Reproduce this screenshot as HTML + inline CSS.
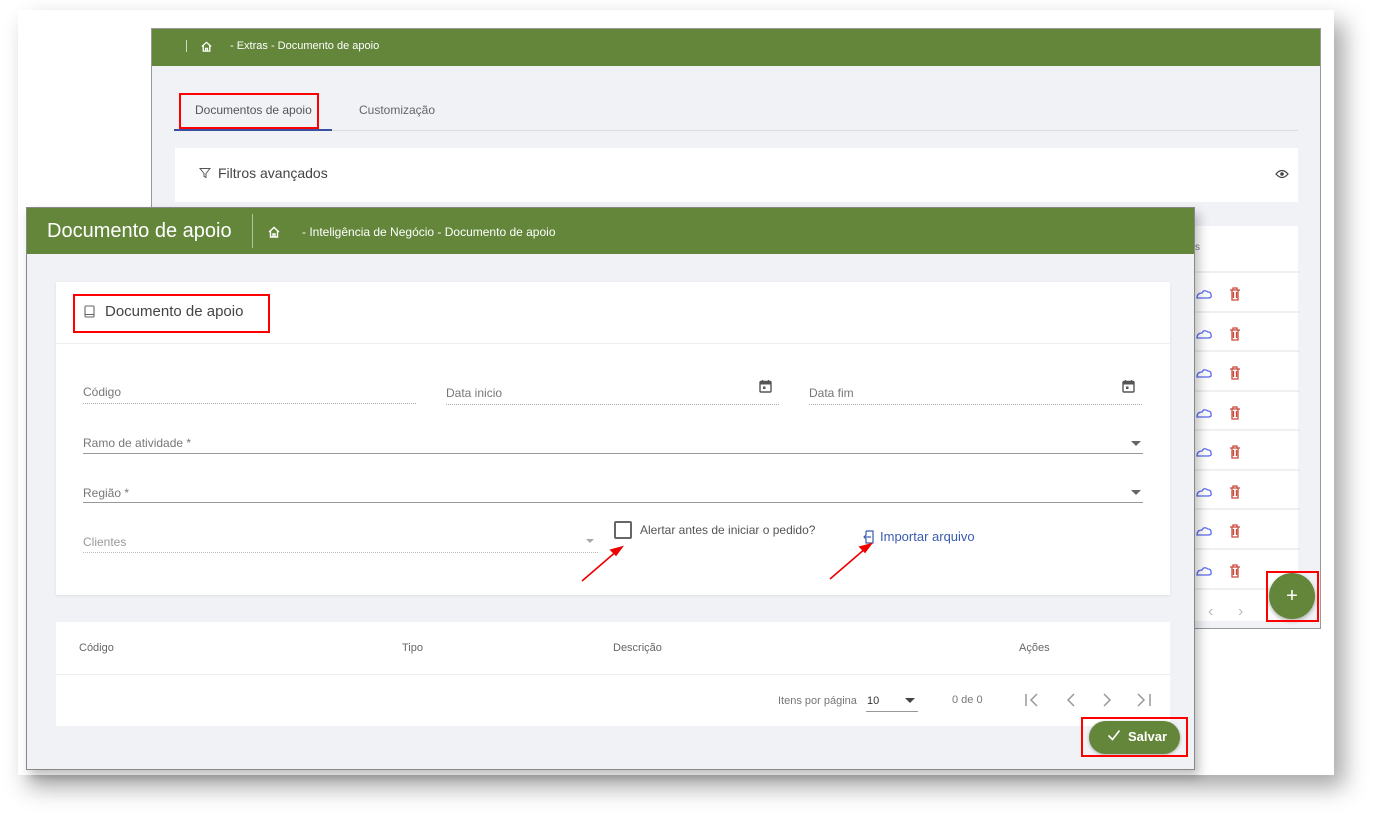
<!DOCTYPE html>
<html><head><meta charset="utf-8"><style>
*{box-sizing:border-box;margin:0;padding:0}
body{width:1382px;height:824px;background:#fff;position:relative;overflow:hidden;font-family:"Liberation Sans",sans-serif;}
.abs{position:absolute}
.g{background:#63863a}
.t{color:#777;font-size:12px;position:absolute}
.red{position:absolute;border:2px solid #f00}
</style></head><body>
<div class="abs" style="left:18px;top:10px;width:1316px;height:765px;background:#fff;box-shadow:10px 12px 22px rgba(0,0,0,.35)"></div>
<!-- back window -->
<div class="abs" style="left:151px;top:28px;width:1170px;height:601px;background:#f1f2f6;border:1px solid #999"></div>
<div class="abs g" style="left:152px;top:29px;width:1168px;height:37px"></div>
<div class="abs" style="left:186px;top:40px;width:1px;height:12px;background:#cfd8c0"></div>
<svg class="abs" style="left:200px;top:40px" width="13" height="13" viewBox="0 0 14 14"><path d="M2 7L7 2.5 12 7M3.5 6v6h7V6M6 12V9h2v3" fill="none" stroke="#fff" stroke-width="1.4"/></svg>
<div class="abs" style="left:230px;top:40px;color:#fff;font-size:11px">- Extras - Documento de apoio</div>
<div class="t" style="left:195px;top:103px;font-size:12px;color:#555">Documentos de apoio</div>
<div class="t" style="left:359px;top:103px;font-size:12px;color:#666">Customização</div>
<div class="abs" style="left:174px;top:130px;width:1124px;height:1px;background:#ddd"></div>
<div class="abs" style="left:174px;top:129px;width:158px;height:2px;background:#3a4fa0"></div>
<div class="red" style="left:179px;top:93px;width:140px;height:36px"></div>
<div class="abs" style="left:175px;top:148px;width:1123px;height:54px;background:#fff"></div>
<svg class="abs" style="left:199px;top:167px" width="12" height="12" viewBox="0 0 12 12"><path d="M1 1.5h10L7 6.5v4L5 9.5v-3z" fill="none" stroke="#555" stroke-width="1"/></svg>
<div class="abs" style="left:218px;top:165px;font-size:14px;color:#444">Filtros avançados</div>
<svg class="abs" style="left:1275px;top:169px" width="14" height="10" viewBox="0 0 14 10"><path d="M1 5Q7-2 13 5Q7 12 1 5z" fill="none" stroke="#444" stroke-width="1.2"/><circle cx="7" cy="5" r="1.8" fill="#444"/></svg>
<div class="abs" style="left:1190px;top:226px;width:108px;height:395px;background:#fff"></div>
<div class="t" style="left:1195px;top:242px;font-size:10px">s</div>
<svg class="abs" style="left:1190px;top:270px" width="110" height="350" fill="none" stroke-width="1.3">
<g transform="translate(0,0)"><line x1="0" y1="2" x2="110" y2="2" stroke="#e6e6e6"/><path d="M7 28q0-5 5-5q2-4 6-1q3 0 3 3q1 3-3 3z" stroke="#5a6cf0"/><path d="M40 20h10M42 20v10h6V20M43.5 22v6M46.5 22v6M43 20v-2h4v2" stroke="#c9493a"/></g>
<g transform="translate(0,40)"><line x1="0" y1="2" x2="110" y2="2" stroke="#e6e6e6"/><path d="M7 28q0-5 5-5q2-4 6-1q3 0 3 3q1 3-3 3z" stroke="#5a6cf0"/><path d="M40 20h10M42 20v10h6V20M43.5 22v6M46.5 22v6M43 20v-2h4v2" stroke="#c9493a"/></g>
<g transform="translate(0,79)"><line x1="0" y1="2" x2="110" y2="2" stroke="#e6e6e6"/><path d="M7 28q0-5 5-5q2-4 6-1q3 0 3 3q1 3-3 3z" stroke="#5a6cf0"/><path d="M40 20h10M42 20v10h6V20M43.5 22v6M46.5 22v6M43 20v-2h4v2" stroke="#c9493a"/></g>
<g transform="translate(0,119)"><line x1="0" y1="2" x2="110" y2="2" stroke="#e6e6e6"/><path d="M7 28q0-5 5-5q2-4 6-1q3 0 3 3q1 3-3 3z" stroke="#5a6cf0"/><path d="M40 20h10M42 20v10h6V20M43.5 22v6M46.5 22v6M43 20v-2h4v2" stroke="#c9493a"/></g>
<g transform="translate(0,158)"><line x1="0" y1="2" x2="110" y2="2" stroke="#e6e6e6"/><path d="M7 28q0-5 5-5q2-4 6-1q3 0 3 3q1 3-3 3z" stroke="#5a6cf0"/><path d="M40 20h10M42 20v10h6V20M43.5 22v6M46.5 22v6M43 20v-2h4v2" stroke="#c9493a"/></g>
<g transform="translate(0,198)"><line x1="0" y1="2" x2="110" y2="2" stroke="#e6e6e6"/><path d="M7 28q0-5 5-5q2-4 6-1q3 0 3 3q1 3-3 3z" stroke="#5a6cf0"/><path d="M40 20h10M42 20v10h6V20M43.5 22v6M46.5 22v6M43 20v-2h4v2" stroke="#c9493a"/></g>
<g transform="translate(0,237)"><line x1="0" y1="2" x2="110" y2="2" stroke="#e6e6e6"/><path d="M7 28q0-5 5-5q2-4 6-1q3 0 3 3q1 3-3 3z" stroke="#5a6cf0"/><path d="M40 20h10M42 20v10h6V20M43.5 22v6M46.5 22v6M43 20v-2h4v2" stroke="#c9493a"/></g>
<g transform="translate(0,277)"><line x1="0" y1="2" x2="110" y2="2" stroke="#e6e6e6"/><path d="M7 28q0-5 5-5q2-4 6-1q3 0 3 3q1 3-3 3z" stroke="#5a6cf0"/><path d="M40 20h10M42 20v10h6V20M43.5 22v6M46.5 22v6M43 20v-2h4v2" stroke="#c9493a"/></g>
<line x1="0" y1="319" x2="110" y2="319" stroke="#e6e6e6"/>
</svg>
<div class="abs" style="left:1208px;top:603px;color:#bbb;font-size:16px">&#8249;</div>
<div class="abs" style="left:1238px;top:603px;color:#bbb;font-size:16px">&#8250;</div>
<div class="abs g" style="left:1269px;top:573px;width:46px;height:46px;border-radius:50%;box-shadow:0 2px 4px rgba(0,0,0,.3);color:#fff;font-size:20px;text-align:center;line-height:46px">+</div>
<div class="red" style="left:1266px;top:571px;width:53px;height:51px"></div>

<!-- front window -->
<div class="abs" style="left:26px;top:207px;width:1169px;height:563px;background:#f1f2f6;border:1px solid #888;box-shadow:4px 6px 10px rgba(0,0,0,.25)"></div>
<div class="abs g" style="left:27px;top:208px;width:1167px;height:46px"></div>
<div class="abs" style="left:47px;top:220px;color:#fff;font-size:20px">Documento de apoio</div>
<div class="abs" style="left:252px;top:214px;width:1px;height:34px;background:#b5c4a0"></div>
<svg class="abs" style="left:267px;top:225px" width="14" height="14" viewBox="0 0 14 14"><path d="M2 7L7 2.5 12 7M3.5 6v6h7V6M6 12V9h2v3" fill="none" stroke="#fff" stroke-width="1.4"/></svg>
<div class="abs" style="left:302px;top:225px;color:#fff;font-size:12px">- Inteligência de Negócio - Documento de apoio</div>
<div class="abs" style="left:56px;top:282px;width:1114px;height:313px;background:#fff;box-shadow:0 1px 3px rgba(0,0,0,.08)"></div>
<div class="abs" style="left:56px;top:343px;width:1114px;height:1px;background:#eee"></div>
<svg class="abs" style="left:84px;top:305px" width="11" height="13" viewBox="0 0 11 13"><rect x="1" y="1" width="9" height="11" rx="1" fill="none" stroke="#666" stroke-width="1.1"/><line x1="1" y1="9.5" x2="10" y2="9.5" stroke="#666"/></svg>
<div class="abs" style="left:105px;top:303px;font-size:15px;color:#444">Documento de apoio</div>
<div class="red" style="left:73px;top:294px;width:197px;height:39px"></div>
<div class="t" style="left:83px;top:385px">Código</div>
<div class="abs" style="left:83px;top:403px;width:333px;border-top:1px dotted #aaa"></div>
<div class="t" style="left:446px;top:386px">Data inicio</div>
<div class="abs" style="left:446px;top:404px;width:333px;border-top:1px dotted #aaa"></div>
<div class="t" style="left:809px;top:386px">Data fim</div>
<div class="abs" style="left:809px;top:404px;width:333px;border-top:1px dotted #aaa"></div>
<svg class="abs" style="left:759px;top:379px" width="13" height="14" viewBox="0 0 13 14"><rect x="1" y="2.5" width="11" height="10.5" rx="1" fill="none" stroke="#555" stroke-width="1.4"/><rect x="1" y="2.5" width="11" height="3" fill="#555"/><rect x="4" y="7.5" width="2.5" height="2.5" fill="#555"/><path d="M3.5 1v2M9.5 1v2" stroke="#555" stroke-width="1.3"/></svg>
<svg class="abs" style="left:1122px;top:379px" width="13" height="14" viewBox="0 0 13 14"><rect x="1" y="2.5" width="11" height="10.5" rx="1" fill="none" stroke="#555" stroke-width="1.4"/><rect x="1" y="2.5" width="11" height="3" fill="#555"/><rect x="4" y="7.5" width="2.5" height="2.5" fill="#555"/><path d="M3.5 1v2M9.5 1v2" stroke="#555" stroke-width="1.3"/></svg>
<div class="t" style="left:83px;top:436px">Ramo de atividade *</div>
<div class="abs" style="left:83px;top:453px;width:1060px;height:1px;background:#999"></div>
<div class="abs" style="left:1131px;top:441px;border:5px solid transparent;border-top-color:#666;border-bottom:0"></div>
<div class="t" style="left:83px;top:486px">Região *</div>
<div class="abs" style="left:83px;top:502px;width:1060px;height:1px;background:#999"></div>
<div class="abs" style="left:1131px;top:490px;border:5px solid transparent;border-top-color:#666;border-bottom:0"></div>
<div class="t" style="left:83px;top:535px;color:#999">Clientes</div>
<div class="abs" style="left:83px;top:552px;width:515px;border-top:1px dotted #bbb"></div>
<div class="abs" style="left:586px;top:539px;border:4px solid transparent;border-top-color:#aaa;border-bottom:0"></div>
<div class="abs" style="left:614px;top:521px;width:18px;height:18px;border:2px solid #666;border-radius:2px"></div>
<div class="abs" style="left:640px;top:523px;font-size:12px;color:#555">Alertar antes de iniciar o pedido?</div>
<svg class="abs" style="left:863px;top:530px" width="12" height="14" viewBox="0 0 12 14"><path d="M3 1h7v12H3V9M3 5V1" fill="none" stroke="#3a5bb0" stroke-width="1.2"/><path d="M8 7H1M3.5 4.5L1 7l2.5 2.5" fill="none" stroke="#3a5bb0" stroke-width="1.2"/></svg>
<div class="abs" style="left:880px;top:529px;font-size:13px;color:#3a5bb0">Importar arquivo</div>
<svg class="abs" style="left:570px;top:540px" width="320" height="45"><g stroke="#e00" stroke-width="1.6" fill="#e00"><line x1="12" y1="41" x2="48" y2="10"/><path d="M52 7l-11 3 5 5z"/><line x1="260" y1="39" x2="296" y2="8"/><path d="M301 4l-11 3 5 5z"/></g></svg>
<div class="abs" style="left:56px;top:622px;width:1114px;height:104px;background:#fff"></div>
<div class="abs" style="left:56px;top:674px;width:1114px;height:1px;background:#eee"></div>
<div class="t" style="left:79px;top:642px;font-size:11px;color:#666">Código</div>
<div class="t" style="left:402px;top:642px;font-size:11px;color:#666">Tipo</div>
<div class="t" style="left:613px;top:642px;font-size:11px;color:#666">Descrição</div>
<div class="t" style="left:1019px;top:642px;font-size:11px;color:#666">Ações</div>
<div class="t" style="left:778px;top:695px;font-size:11px;color:#777">Itens por página</div>
<div class="t" style="left:867px;top:695px;font-size:11px;color:#333">10</div>
<div class="abs" style="left:866px;top:711px;width:52px;height:1px;background:#999"></div>
<div class="abs" style="left:905px;top:698px;border:5px solid transparent;border-top-color:#444;border-bottom:0"></div>
<div class="t" style="left:952px;top:694px;font-size:11px;color:#777">0 de 0</div>
<svg class="abs" style="left:1020px;top:690px" width="140" height="20" fill="none" stroke="#999" stroke-width="1.5"><path d="M6 4v12M17 4l-6 6 6 6"/><path d="M54 4l-6 6 6 6"/><path d="M84 4l6 6-6 6"/><path d="M118 4l6 6-6 6M130 4v12"/></svg>
<div class="abs g" style="left:1089px;top:721px;width:91px;height:33px;border-radius:17px;box-shadow:0 1px 3px rgba(0,0,0,.3)"></div>
<svg class="abs" style="left:1107px;top:729px" width="14" height="12"><path d="M1.5 6.5l4 4 7-9" fill="none" stroke="#fff" stroke-width="1.6"/></svg>
<div class="abs" style="left:1128px;top:729px;color:#fff;font-size:13px;font-weight:bold">Salvar</div>
<div class="red" style="left:1081px;top:717px;width:107px;height:40px"></div>
</body></html>
